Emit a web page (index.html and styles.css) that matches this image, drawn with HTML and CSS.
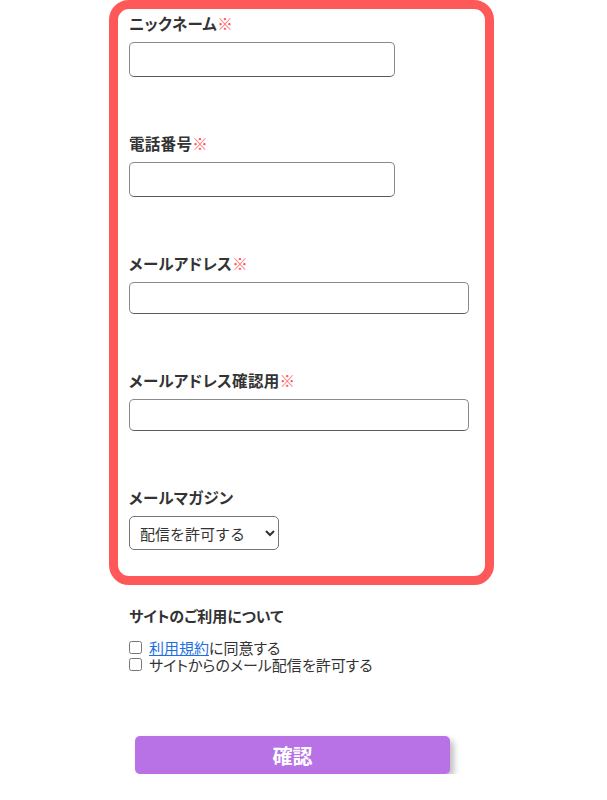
FILE: index.html
```html
<!DOCTYPE html>
<html lang="ja">
<head>
<meta charset="utf-8">
<link rel="stylesheet" href="styles.css">
</head>
<body>
<div class="form">
  <div class="box">
    <div class="field">
      <label class="label">ニックネーム<span class="req">※</span></label>
      <input class="input input-short" type="text">
    </div>
    <div class="field">
      <label class="label">電話番号<span class="req">※</span></label>
      <input class="input input-short" type="text">
    </div>
    <div class="field">
      <label class="label">メールアドレス<span class="req">※</span></label>
      <input class="input input-wide" type="text">
    </div>
    <div class="field">
      <label class="label">メールアドレス確認用<span class="req">※</span></label>
      <input class="input input-wide" type="text">
    </div>
    <div class="field">
      <label class="label">メールマガジン</label>
      <select class="select">
        <option>配信を許可する</option>
        <option>配信を許可しない</option>
      </select>
    </div>
  </div>
  <div class="terms">
    <div class="terms-title">サイトのご利用について</div>
    <label class="check"><input type="checkbox" class="cb"><a href="#" class="link">利用規約</a>に同意する</label>
    <label class="check"><input type="checkbox" class="cb">サイトからのメール配信を許可する</label>
  </div>
  <button class="submit" type="button">確認</button>
</div>
</body>
</html>
```
FILE: styles.css
```css
html, body {
  margin: 0;
  padding: 0;
  background: #fff;
}
body {
  font-family: "Noto Sans CJK JP", "Noto Sans", sans-serif;
  color: #333;
  font-feature-settings: "palt";
}
.form {
  width: 385px;
  margin-left: 109px;
  display: flex;
  flex-direction: column;
}
.box {
  border: 9px solid #ff5858;
  border-radius: 20px;
  padding: 2px 11px 26px 11px;
  display: flex;
  flex-direction: column;
  gap: 54px;
}
.field {
  display: flex;
  flex-direction: column;
  align-items: flex-start;
}
.label {
  display: block;
  height: 24px;
  font-size: 15.5px;
  line-height: 24px;
  font-weight: 700;
  color: #333;
  margin-bottom: 7px;
  letter-spacing: 0.3px;
}
.req {
  color: #ff5a5a;
  font-weight: 400;
  letter-spacing: 0;
}
.input {
  box-sizing: border-box;
  border: 1px solid #8a8a8a;
  border-bottom-color: #5a5a5a;
  border-radius: 5px;
  background: #fff;
  padding: 0 8px;
  font-size: 16px;
  font-family: inherit;
}
.input-short {
  width: 266px;
  height: 35px;
}
.input-wide {
  width: 340px;
  height: 32px;
}
.select {
  box-sizing: border-box;
  width: 150px;
  height: 34px;
  border: 1px solid #767676;
  border-radius: 5px;
  background: #fff;
  color: #333;
  font-family: inherit;
  font-size: 15px;
  padding: 0 4px 0 6px;
}
.terms {
  padding-left: 20px;
  margin-top: 20px;
  display: flex;
  flex-direction: column;
}
.terms-title {
  font-size: 15px;
  line-height: 22px;
  font-weight: 700;
  color: #333;
  margin-bottom: 12px;
}
.check {
  display: flex;
  align-items: center;
  font-size: 15px;
  line-height: 17px;
  color: #333;
}
.cb {
  width: 13px;
  height: 13px;
  margin: 0 7px 0 0;
}
.link {
  color: #1f6fe0;
  text-decoration: underline;
}
.submit {
  margin-top: 63px;
  margin-left: 26px;
  width: 315px;
  height: 38px;
  border: none;
  border-radius: 5px;
  background: #b872e6;
  color: #fff;
  font-family: inherit;
  font-size: 20px;
  font-weight: 700;
  box-shadow: 4px 4px 6px rgba(0, 0, 0, 0.25);
  cursor: pointer;
}
```
